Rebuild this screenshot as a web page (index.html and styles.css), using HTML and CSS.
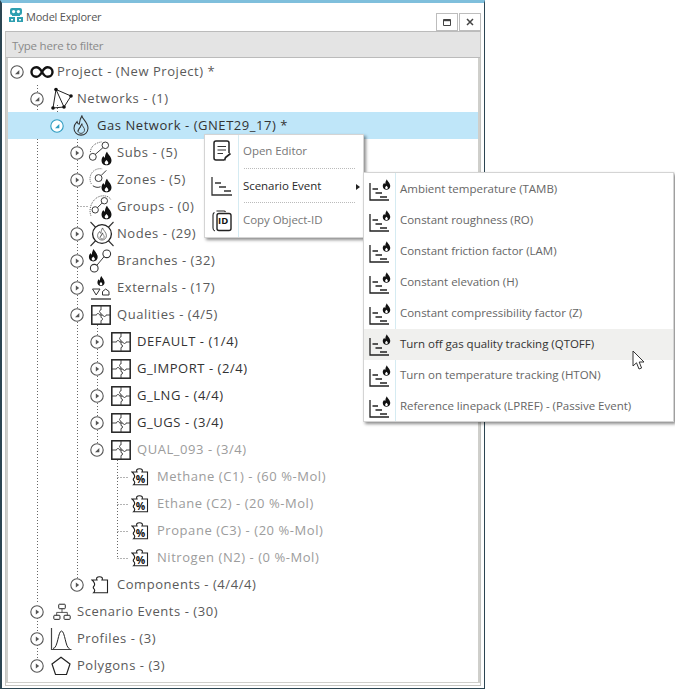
FILE: index.html
```html
<!DOCTYPE html>
<html lang="en">
<head>
<meta charset="utf-8">
<title>Model Explorer</title>
<link rel="stylesheet" href="styles.css">
</head>
<body>
<svg class="defs" aria-hidden="true">
  <symbol id="exp-open" viewBox="0 0 14 14"><circle cx="7" cy="7" r="6.2" fill="#fff" stroke="currentColor" stroke-width="1.1"/><path d="M9.3 5 V9.3 H5 Z" fill="currentColor"/></symbol>
  <symbol id="exp-closed" viewBox="0 0 14 14"><circle cx="7" cy="7" r="6.2" fill="#fff" stroke="currentColor" stroke-width="1.1"/><path d="M5.8 4.4 L9.2 7 L5.8 9.6 Z" fill="currentColor"/></symbol>
  <symbol id="i-inf" viewBox="0 0 26 16"><path d="M13 8 C10.5 3.5 8.5 2.8 6.8 2.8 A5.2 5.2 0 0 0 6.8 13.2 C8.5 13.2 10.5 12.5 13 8 C15.5 3.5 17.5 2.8 19.2 2.8 A5.2 5.2 0 0 1 19.2 13.2 C17.5 13.2 15.5 12.5 13 8Z" fill="none" stroke="#111" stroke-width="2.6"/></symbol>
  <symbol id="i-net" viewBox="0 0 24 24"><path d="M6 2.5 L21 9 L14 20 L3 21 Z M6 2.5 L14 20" fill="none" stroke="#222" stroke-width="1"/><g fill="#111"><circle cx="6" cy="2.5" r="1.8"/><circle cx="21" cy="9" r="1.8"/><circle cx="14" cy="20" r="1.8"/><circle cx="3" cy="21" r="1.8"/></g></symbol>
  <symbol id="flame-o" viewBox="0 0 20 24"><path d="M11 1 C12 5 18 9 18 15 C18 20 14 23 10 23 C6 23 2 20 2 15 C2 12 4 9 5.5 7.5 C6 9.5 7 10.5 8 10.5 C8.5 7 9 4 11 1Z" fill="none" stroke="#333" stroke-width="1.2"/><path d="M11 10 C11 13 14.5 14.5 14 17.5 C13.7 19.5 12 21 10 21 C8.5 21 7 20 6.5 18.5 M6.5 18.5 C6.5 17 7.5 16 8 15 C9 15.5 9.5 13 11 10Z" fill="none" stroke="#333" stroke-width="1"/></symbol>
  <symbol id="flame" viewBox="0 0 12 14"><path d="M6.5 0 C7 2.5 11 5 11 9 C11 12 8.7 14 6 14 C3.2 14 1 12 1 9 C1 7 2 5.5 3 4.5 C3.3 5.7 3.8 6.2 4.3 6.2 C4.6 4 5 2 6.5 0Z M6 8.5 C5 9.7 4.2 10.3 4.2 11.3 C4.2 12.3 5 13 6 13 C7 13 7.8 12.3 7.8 11.3 C7.8 10.3 6.8 9.7 6 8.5Z" fill="#111" fill-rule="evenodd"/></symbol>
  <symbol id="i-subs" viewBox="0 0 26 26"><circle cx="18" cy="5" r="3.4" fill="none" stroke="#333"/><circle cx="5" cy="17" r="3.6" fill="none" stroke="#333"/><path d="M7.5 14.5 L15.5 7.5" stroke="#333"/><path d="M2.5 12 C3 6 7.5 2.5 14 1.5" fill="none" stroke="#555" stroke-dasharray="1 1"/><use href="#flame" x="13" y="11.5" width="12.5" height="14.5"/></symbol>
  <symbol id="i-zones" viewBox="0 0 26 26"><circle cx="11" cy="11" r="3.6" fill="none" stroke="#333"/><path d="M14 8 L19 3" stroke="#333"/><path d="M3.5 17 A10.5 10.5 0 0 1 15 1.5" fill="none" stroke="#555" stroke-dasharray="1 1"/><path d="M5 19 C8 21 11 21 13 20" fill="none" stroke="#333"/><use href="#flame" x="13" y="11.5" width="12.5" height="14.5"/></symbol>
  <symbol id="i-groups" viewBox="0 0 26 26"><circle cx="17" cy="6.5" r="3.3" fill="none" stroke="#333"/><circle cx="7.5" cy="16" r="3.3" fill="none" stroke="#333"/><path d="M10 13.5 L14.5 9" stroke="#333"/><path d="M3 22 C0 14 5 3 14 1.5 C18 1 22 2 23.5 5" fill="none" stroke="#555" stroke-dasharray="1 1"/><use href="#flame" x="13" y="11.5" width="12.5" height="14.5"/></symbol>
  <symbol id="i-nodes" viewBox="0 0 26 26"><path d="M1.5 1 L24.5 25 M24.5 1 L1.5 25" stroke="#333" stroke-width="1.1"/><circle cx="13" cy="13" r="9.4" fill="#fff" stroke="#222" stroke-width="1.3"/><use href="#flame-o" x="7.5" y="6" width="11" height="14"/></symbol>
  <symbol id="i-branches" viewBox="0 0 26 26"><use href="#flame" x="0" y="0" width="11" height="14"/><circle cx="6.5" cy="20.5" r="4" fill="none" stroke="#333" stroke-width="1.1"/><circle cx="19.5" cy="5.5" r="4" fill="none" stroke="#333" stroke-width="1.1"/><path d="M9.2 17.5 L16.7 8.5" stroke="#333"/></symbol>
  <symbol id="i-ext" viewBox="0 0 22 24"><use href="#flame" x="6.5" y="0" width="9" height="10"/><path d="M2.5 13 H10 L6.2 19 Z M12.5 19 H19 V15.5 L15.7 13 L12.5 15.5 Z" fill="none" stroke="#333"/><path d="M1 23 H21" stroke="#222" stroke-width="1.2"/></symbol>
  <symbol id="i-qual" viewBox="0 0 20 20"><rect x=".8" y=".8" width="18.4" height="18.4" fill="#fff" stroke="#222" stroke-width="1.5"/><path d="M10 1 V5 C8 5 8 8 10 8 V10 V12.5 C12 12.5 12 15.5 10 15.5 V19 M1 10 H5.5 C5.5 8 8.5 8 8.5 10 H12 C12 12 15 12 15 10 H19" fill="none" stroke="#333" stroke-width=".9"/></symbol>
  <symbol id="i-comp" viewBox="0 0 18 18"><path d="M1 4 H6 C5 2 6 .8 8.5 .8 C11 .8 12 2 11 4 H16.5 V16.8 H2.5 C4 15.3 4 13.8 3 12.8 C2 11.8 2 11 3 10 C4.5 8.5 3 5.5 1 4Z" fill="#fff" stroke="#222" stroke-width="1.1"/></symbol>
  <symbol id="i-org" viewBox="0 0 22 22"><path d="M11 7 V11.5 M4.5 15 V11.5 H17.5 V15" fill="none" stroke="#333"/><rect x="7" y="1.5" width="8" height="5.5" rx="1" fill="none" stroke="#222" stroke-width="1.2"/><rect x="1" y="15" width="7.5" height="5" rx="1" fill="none" stroke="#222" stroke-width="1.2"/><rect x="13.5" y="15" width="7.5" height="5" rx="1" fill="none" stroke="#222" stroke-width="1.2"/></symbol>
  <symbol id="i-prof" viewBox="0 0 22 24"><path d="M1.5 1 V22.5 H21.5" fill="none" stroke="#444" stroke-width="1.2"/><path d="M3 21.5 C8 21.5 8 4 11.5 4 C15 4 15.5 21.5 19.5 21.5" fill="none" stroke="#222"/></symbol>
  <symbol id="i-poly" viewBox="0 0 20 20"><path d="M10 1.2 L19 8 L15.5 18.5 H4.5 L1 8 Z" fill="none" stroke="#222" stroke-width="1.2"/></symbol>
  <symbol id="i-edit" viewBox="0 0 18 22"><path d="M3 1 H14 Q16 1 16 3 V13 M3 1 Q1 1 1 3 V18 Q1 20 3 20 H11" fill="none" stroke="#222" stroke-width="1.5"/><path d="M4.5 6.5 H13 M4.5 10 H13 M4.5 13.5 H10" stroke="#333" stroke-width="1.2"/><path d="M11.5 20.5 L12.5 17.5 L17.5 13.5" fill="none" stroke="#222" stroke-width="1.7"/></symbol>
  <symbol id="i-event" viewBox="0 0 22 20"><path d="M1 1 V19 H21" fill="none" stroke="#333" stroke-width="1.3"/><path d="M4 7 H10 M8 11 H15 M13 15 H20" stroke="#333" stroke-width="1.3"/></symbol>
  <symbol id="i-event-f" viewBox="0 0 22 22"><path d="M1 4 V21 H20" fill="none" stroke="#222" stroke-width="1.3"/><path d="M3.5 10 H9 M6.5 14 H13 M11 18 H18" stroke="#222" stroke-width="1.3"/><use href="#flame" x="13" y="0" width="9" height="11"/></symbol>
  <symbol id="i-id" viewBox="0 0 20 22"><path d="M4.5 1 H12 Q13 1 13.5 2 M2.5 2.5 Q1 3 1 5 V18 Q1 20.5 3 21" fill="none" stroke="#222" stroke-width="1.1"/><rect x="5" y="3.5" width="14" height="17" rx="2" fill="#fff" stroke="#222" stroke-width="1.4"/></symbol>
</svg>

<div class="window">
  <header class="titlebar">
    <svg class="logo" viewBox="0 0 14 14"><path d="M3 0 H11 Q13 0 13 2 V5 Q13 7 11 7 V8 H3 V7 Q1 7 1 5 V2 Q1 0 3 0Z" fill="#2e9fb0"/><circle cx="4.6" cy="3.6" r="1.6" fill="#fff"/><circle cx="9.4" cy="3.6" r="1.6" fill="#fff"/><path d="M0 9 H6 V14 H0 Z M8 9 H14 V14 H8 Z" fill="#2e9fb0"/><path d="M2 11 H4 V12.5 H2 Z M10 11 H12 V12.5 H10 Z" fill="#fff"/></svg>
    <span class="title">Model Explorer</span>
    <div class="wbuttons">
      <button class="wbtn"><svg width="8" height="7" viewBox="0 0 8 7"><path d="M.5 .5 H7.5 V6.5 H.5 Z" fill="none" stroke="#444"/><path d="M0 1.5 H8" stroke="#444" stroke-width="1.4"/></svg></button>
      <button class="wbtn"><svg width="8" height="8" viewBox="0 0 8 8"><path d="M1 1 L7 7 M7 1 L1 7" stroke="#444" stroke-width="1.5"/></svg></button>
    </div>
  </header>
  <div class="panel">
    <div class="filter">Type here to filter</div>
    <div class="tree">
      <svg class="guides" width="473" height="625" viewBox="0 0 473 625" aria-hidden="true">
        <path d="M29.5 27 V546 M29.5 560 V573 M29.5 587 V600 M49.5 47 V60 M69.5 81 V520 M69.5 148.5 H80 M89.5 267 V392 M109.5 399 V500.5 M109.5 419.5 H120 M109.5 446.5 H120 M109.5 473.5 H120 M109.5 500.5 H120"/>
      </svg>
      <div class="row l0 t-dim"><svg class="exp"><use href="#exp-open"/></svg><span class="ic"><svg class="w24 h16"><use href="#i-inf"/></svg></span><span class="lbl">Project - (New Project) *</span></div>
      <div class="row l1 t-dim"><svg class="exp"><use href="#exp-open"/></svg><span class="ic"><svg class="w24 h24"><use href="#i-net"/></svg></span><span class="lbl">Networks - (1)</span></div>
      <div class="row l2 selected t-dark"><svg class="exp exp-sel"><use href="#exp-open"/></svg><span class="ic"><svg class="w18 h21 nudge"><use href="#flame-o"/></svg></span><span class="lbl">Gas Network - (GNET29_17) *</span></div>
      <div class="row l3 t-dim"><svg class="exp"><use href="#exp-closed"/></svg><span class="ic"><svg class="w26 h26 nudge"><use href="#i-subs"/></svg></span><span class="lbl">Subs - (5)</span></div>
      <div class="row l3 t-dim"><svg class="exp"><use href="#exp-closed"/></svg><span class="ic"><svg class="w26 h26 nudge"><use href="#i-zones"/></svg></span><span class="lbl">Zones - (5)</span></div>
      <div class="row l3 t-dim"><span class="exp"></span><span class="ic"><svg class="w26 h26 nudge"><use href="#i-groups"/></svg></span><span class="lbl">Groups - (0)</span></div>
      <div class="row l3 t-dim"><svg class="exp"><use href="#exp-closed"/></svg><span class="ic"><svg class="w26 h26"><use href="#i-nodes"/></svg></span><span class="lbl">Nodes - (29)</span></div>
      <div class="row l3 t-dim"><svg class="exp"><use href="#exp-closed"/></svg><span class="ic"><svg class="w26 h26 nudge"><use href="#i-branches"/></svg></span><span class="lbl">Branches - (32)</span></div>
      <div class="row l3 t-dim"><svg class="exp"><use href="#exp-closed"/></svg><span class="ic"><svg class="w22 h24 nudge"><use href="#i-ext"/></svg></span><span class="lbl">Externals - (17)</span></div>
      <div class="row l3 t-dim"><svg class="exp"><use href="#exp-open"/></svg><span class="ic"><svg class="w20 h20 nudge"><use href="#i-qual"/></svg></span><span class="lbl">Qualities - (4/5)</span></div>
      <div class="row l4 t-dark"><svg class="exp"><use href="#exp-closed"/></svg><span class="ic"><svg class="w20 h20 nudge"><use href="#i-qual"/></svg></span><span class="lbl">DEFAULT - (1/4)</span></div>
      <div class="row l4 t-dark"><svg class="exp"><use href="#exp-closed"/></svg><span class="ic"><svg class="w20 h20 nudge"><use href="#i-qual"/></svg></span><span class="lbl">G_IMPORT - (2/4)</span></div>
      <div class="row l4 t-dark"><svg class="exp"><use href="#exp-closed"/></svg><span class="ic"><svg class="w20 h20 nudge"><use href="#i-qual"/></svg></span><span class="lbl">G_LNG - (4/4)</span></div>
      <div class="row l4 t-dark"><svg class="exp"><use href="#exp-closed"/></svg><span class="ic"><svg class="w20 h20 nudge"><use href="#i-qual"/></svg></span><span class="lbl">G_UGS - (3/4)</span></div>
      <div class="row l4 t-faint"><svg class="exp"><use href="#exp-open"/></svg><span class="ic"><svg class="w20 h20 nudge"><use href="#i-qual"/></svg></span><span class="lbl">QUAL_093 - (3/4)</span></div>
      <div class="row l5 t-faint"><span class="exp"></span><span class="ic"><svg class="w18 h18 nudge2" viewBox="0 0 18 18"><use href="#i-comp"/><text x="9.8" y="14.5" class="pct">%</text></svg></span><span class="lbl">Methane (C1) - (60 %-Mol)</span></div>
      <div class="row l5 t-faint"><span class="exp"></span><span class="ic"><svg class="w18 h18 nudge2" viewBox="0 0 18 18"><use href="#i-comp"/><text x="9.8" y="14.5" class="pct">%</text></svg></span><span class="lbl">Ethane (C2) - (20 %-Mol)</span></div>
      <div class="row l5 t-faint"><span class="exp"></span><span class="ic"><svg class="w18 h18 nudge2" viewBox="0 0 18 18"><use href="#i-comp"/><text x="9.8" y="14.5" class="pct">%</text></svg></span><span class="lbl">Propane (C3) - (20 %-Mol)</span></div>
      <div class="row l5 t-faint"><span class="exp"></span><span class="ic"><svg class="w18 h18 nudge2" viewBox="0 0 18 18"><use href="#i-comp"/><text x="9.8" y="14.5" class="pct">%</text></svg></span><span class="lbl">Nitrogen (N2) - (0 %-Mol)</span></div>
      <div class="row l3 t-dim"><svg class="exp"><use href="#exp-closed"/></svg><span class="ic"><svg class="w18 h18 nudge2"><use href="#i-comp"/></svg></span><span class="lbl">Components - (4/4/4)</span></div>
      <div class="row l1 t-dim"><svg class="exp"><use href="#exp-closed"/></svg><span class="ic"><svg class="w18 h18"><use href="#i-org"/></svg></span><span class="lbl">Scenario Events - (30)</span></div>
      <div class="row l1 t-dim"><svg class="exp"><use href="#exp-closed"/></svg><span class="ic"><svg class="w22 h24 nudge"><use href="#i-prof"/></svg></span><span class="lbl">Profiles - (3)</span></div>
      <div class="row l1 t-dim"><svg class="exp"><use href="#exp-closed"/></svg><span class="ic"><svg class="w20 h20 nudge"><use href="#i-poly"/></svg></span><span class="lbl">Polygons - (3)</span></div>
    </div>
  </div>
</div>

<div class="menu menu-main">
  <div class="mitem"><span class="mic"><svg class="w18 h22"><use href="#i-edit"/></svg></span><span class="lbl mlabel muted">Open Editor</span></div>
  <div class="msep"></div>
  <div class="mitem"><span class="mic"><svg class="w22 h20"><use href="#i-event"/></svg></span><span class="lbl mlabel strong">Scenario Event</span><span class="arrow"></span></div>
  <div class="msep"></div>
  <div class="mitem"><span class="mic"><svg class="w20 h22"><use href="#i-id"/></svg><b class="id-text">ID</b></span><span class="lbl mlabel muted">Copy Object-ID</span></div>
</div>

<div class="menu menu-sub">
  <div class="sitem"><span class="sic"><svg class="w22 h22"><use href="#i-event-f"/></svg></span><span class="lbl">Ambient temperature (TAMB)</span></div>
  <div class="sitem"><span class="sic"><svg class="w22 h22"><use href="#i-event-f"/></svg></span><span class="lbl">Constant roughness (RO)</span></div>
  <div class="sitem"><span class="sic"><svg class="w22 h22"><use href="#i-event-f"/></svg></span><span class="lbl">Constant friction factor (LAM)</span></div>
  <div class="sitem"><span class="sic"><svg class="w22 h22"><use href="#i-event-f"/></svg></span><span class="lbl">Constant elevation (H)</span></div>
  <div class="sitem"><span class="sic"><svg class="w22 h22"><use href="#i-event-f"/></svg></span><span class="lbl">Constant compressibility factor (Z)</span></div>
  <div class="sitem hover"><span class="sic"><svg class="w22 h22"><use href="#i-event-f"/></svg></span><span class="lbl">Turn off gas quality tracking (QTOFF)</span></div>
  <div class="sitem"><span class="sic"><svg class="w22 h22"><use href="#i-event-f"/></svg></span><span class="lbl">Turn on temperature tracking (HTON)</span></div>
  <div class="sitem"><span class="sic"><svg class="w22 h22"><use href="#i-event-f"/></svg></span><span class="lbl">Reference linepack (LPREF) - (Passive Event)</span></div>
</div>

<svg class="cursor" width="14" height="21" viewBox="0 0 14 21"><path d="M1 1 V16 L4.5 12.8 L7 19 L9.6 18 L7.2 12 H12 Z" fill="#fff" stroke="#333" stroke-width="1"/></svg>
</body>
</html>
```
FILE: styles.css
```css
* { box-sizing: border-box; }
html, body { margin: 0; padding: 0; background: #fff; }
body {
  position: relative;
  width: 675px;
  height: 689px;
  overflow: hidden;
  font-family: "Open Sans", "Liberation Sans", sans-serif;
}
.defs { position: absolute; width: 0; height: 0; }
.pct { font: 700 10.5px "Open Sans", sans-serif; text-anchor: middle; fill: #111; }

.window {
  width: 485px;
  height: 689px;
  background: #fff;
  border-top: 3px solid #7fbfdc;
  border-left: 2px solid #2c4552;
  border-right: 1px solid #2c4552;
  border-bottom: 1px solid #2c4552;
  display: flex;
  flex-direction: column;
  padding: 0 3px 2px 3px;
}
.titlebar {
  height: 28px;
  flex: none;
  display: flex;
  align-items: flex-start;
}
.logo { width: 14px; height: 14px; margin: 5px 0 0 4px; flex: none; }
.title { font-size: 11px; letter-spacing: -.2px; color: #555; margin: 5px 0 0 3px; line-height: 18px; }
.wbuttons { margin-left: auto; display: flex; gap: 1px; margin-top: 10px; }
.wbtn {
  width: 22px;
  height: 18px;
  padding: 0;
  background: #fff;
  border: 1px solid #bdbdbd;
  display: flex;
  align-items: center;
  justify-content: center;
}

.panel {
  flex: 1;
  display: flex;
  flex-direction: column;
  border: 1px solid #c4c4c0;
  border-top-color: #bbb;
  min-height: 0;
}
.filter {
  height: 26px;
  flex: none;
  background: #e4e4e4;
  border-bottom: 1px solid #bbb;
  color: #8a8a8a;
  font-size: 11.5px;
  letter-spacing: -.2px;
  line-height: 28px;
  padding-left: 6px;
}
.tree {
  position: relative;
  flex: 1;
  margin: 0 0 2px 0;
  border-right: 2px solid #cfcfcb;
  border-bottom: 1px solid #cfcfcb;
  border-left: 2px solid #cfcfcb;
  overflow: hidden;
}
.guides { position: absolute; left: 0; top: 0; }
.guides path { fill: none; stroke: #666; stroke-width: 1; stroke-dasharray: 1 2; }

.row {
  position: relative;
  height: 27px;
  display: flex;
  align-items: center;
  font-size: 13px;
  letter-spacing: .55px;
  white-space: nowrap;
}
.lbl { margin-bottom: 2px; }
.l0 { padding-left: 0; }
.l1 { padding-left: 20px; }
.l2 { padding-left: 40px; }
.l3 { padding-left: 60px; }
.l4 { padding-left: 80px; }
.l5 { padding-left: 100px; }
.selected { background: #bfe6f9; }
.t-dim { color: #5a5a5a; }
.t-dark { color: #333; }
.t-faint { color: #9c9c9c; }

.exp { width: 14px; height: 14px; margin-left: 2px; margin-right: 4px; flex: none; color: #555; }
.exp-sel { color: #2f9cc0; }
.ic { width: 29px; padding-right: 2px; flex: none; display: flex; align-items: center; justify-content: center; }
.nudge { margin-right: 2px; }
.nudge2 { margin-right: 3px; }

.w18 { width: 18px; } .w20 { width: 20px; } .w22 { width: 22px; } .w24 { width: 24px; } .w26 { width: 26px; }
.h16 { height: 16px; } .h18 { height: 18px; } .h20 { height: 20px; } .h21 { height: 21px; } .h22 { height: 22px; } .h24 { height: 24px; } .h26 { height: 26px; }

.menu {
  position: absolute;
  background: #fff;
  border: 1px solid #d4d4d4;
  box-shadow: 2px 2px 3px rgba(0, 0, 0, .45);
  font-size: 11.5px;
  letter-spacing: -.05px;
  white-space: nowrap;
}
.menu-main {
  left: 204px;
  top: 134px;
  width: 160px;
  height: 104px;
  background: linear-gradient(to right, #fff 33px, #d5ebf2 33px, #d5ebf2 34px, #fff 34px);
  display: flex;
  flex-direction: column;
  justify-content: center;
}
.mitem { height: 34px; display: flex; align-items: center; position: relative; }
.msep { height: 2px; margin-left: 39px; margin-right: 8px; border-top: 1px dotted #bbb; }
.mic { width: 33px; flex: none; display: flex; justify-content: center; position: relative; }
.mlabel { margin-left: 5px; }
.muted { color: #777; }
.strong { color: #2a2a2a; }
.arrow {
  position: absolute;
  right: 3px;
  top: 14px;
  border-left: 4px solid #222;
  border-top: 3px solid transparent;
  border-bottom: 3px solid transparent;
}
.id-text {
  position: absolute;
  left: 13px;
  top: 5px;
  font-size: 9.5px;
  line-height: 12px;
  letter-spacing: 0;
  color: #111;
}

.menu-sub {
  left: 363px;
  top: 172px;
  width: 311px;
  height: 250px;
  padding-top: 1px;
  background: linear-gradient(to right, #fff 31px, #d5ebf2 31px, #d5ebf2 32px, #fff 32px);
  color: #666;
  font-size: 11.5px;
  letter-spacing: -.02px;
}
.sitem { height: 31px; display: flex; align-items: center; }
.sic { width: 32px; margin-right: 4px; flex: none; display: flex; justify-content: center; }
.hover { background: #f0f0ee; color: #333; }

.cursor { position: absolute; left: 632px; top: 350px; }
```
